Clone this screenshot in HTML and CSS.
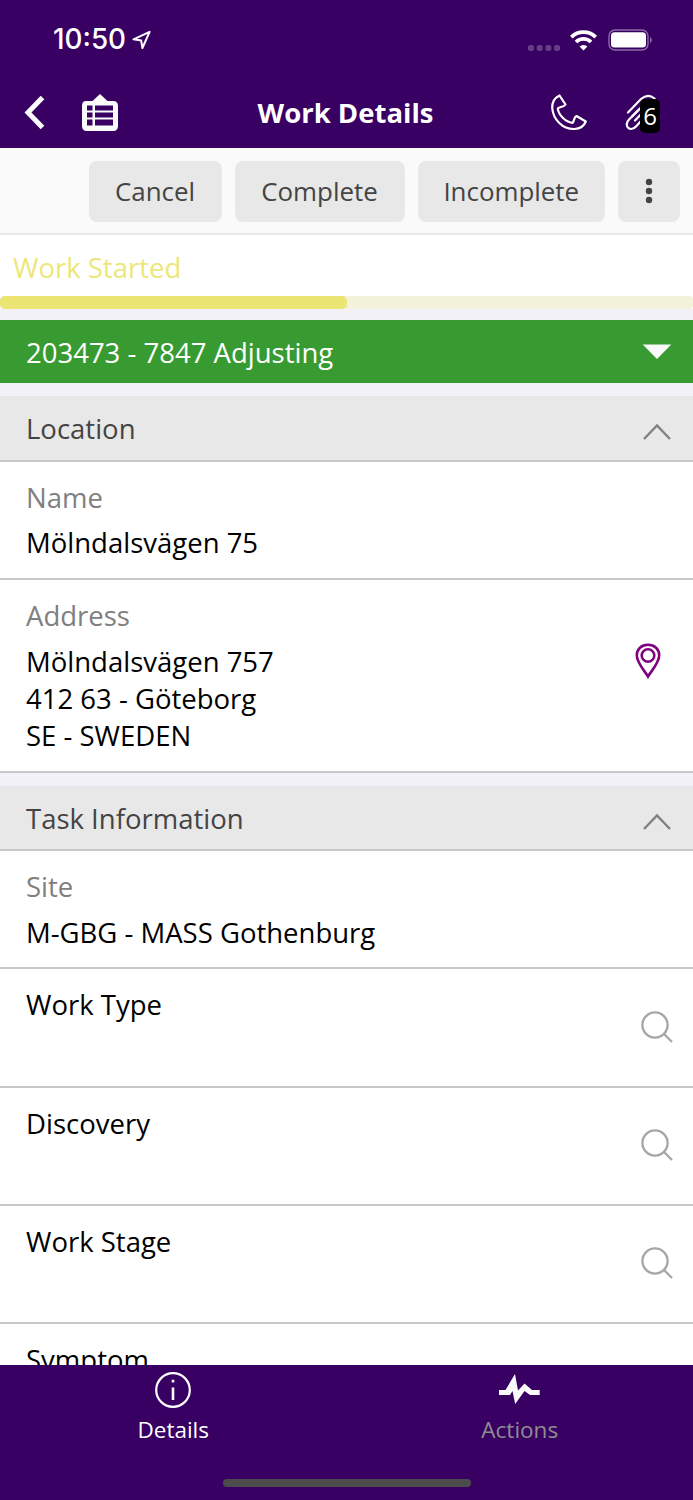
FILE: index.html
```
<!DOCTYPE html>
<html lang="en">
<head>
    <meta charset="UTF-8">
    <meta name="viewport" content="width=device-width, initial-scale=1.0">
    <title>Work Details</title>
    <link rel="stylesheet" href="styles.css">
</head>
<body>
<div class="app">
    <header class="header">
        <div class="status-bar">
            <span class="time">10:50</span>
            <svg class="location-arrow" width="20" height="20" viewBox="0 0 20 20">
                <path d="M1.5 9.3 L17.6 1.8 L10.4 18 L9.2 10.6 Z"/>
            </svg>
            <div class="status-icons">
                <svg width="33" height="6" viewBox="0 0 33 6" fill="#643c85">
                    <rect x="0" y="0" width="6" height="6" rx="2"/>
                    <rect x="8.7" y="0" width="6" height="6" rx="2"/>
                    <rect x="17.4" y="0" width="6" height="6" rx="2"/>
                    <rect x="26" y="0" width="6" height="6" rx="2"/>
                </svg>
                <svg class="wifi" width="27" height="21" viewBox="0 0 27 21" fill="none" stroke="#fff" stroke-width="3.8">
                    <path d="M1.3 7.1 A17.6 17.6 0 0 1 25.7 7.1"/>
                    <path d="M6 12 A10.8 10.8 0 0 1 21 12"/>
                    <path d="M13.5 20.6 L9.6 16.6 A5.6 5.6 0 0 1 17.4 16.6 Z" fill="#fff" stroke="none"/>
                </svg>
                <svg class="battery" width="45" height="22" viewBox="0 0 45 22">
                    <rect x="1" y="1" width="39" height="20" rx="6" fill="none" stroke="#8a6aa5" stroke-width="1.4"/>
                    <rect x="3" y="3.2" width="35" height="15.4" rx="3.5" fill="#fff"/>
                    <path d="M42 8 C44.4 9 44.4 13 42 14 Z" fill="#8a6aa5"/>
                </svg>
            </div>
        </div>
        <div class="nav-bar">
            <svg class="back" width="22" height="36" viewBox="0 0 22 36">
                <path d="M19.500 2.500 L5 17.500 L19.500 32.500"/>
            </svg>
            <svg class="board" width="38" height="40" viewBox="0 0 38 40">
                <path fill="#fafafa" fill-rule="evenodd" d="M5 8 H11.5 L19 1 L26.500 8 H32 Q37 8 37 13 V33 Q37 38 32 38 H6 Q1 38 1 33 V13 Q1 8 5 8 Z M6 12.500 V17.500 H11.500 V12.500 Z M14 12.500 V17.500 H32 V12.500 Z M6 19.500 V24.500 H11.500 V19.500 Z M14 19.500 V24.500 H32 V19.500 Z M6 26.500 V32.500 H11.500 V26.500 Z M14 26.500 V32.500 H32 V26.500 Z"/>
            </svg>
            <h1 class="title">Work Details</h1>
            <svg class="phone" width="38" height="38" viewBox="0 0 38 38">
                <path d="M9.500 1.500 C4.500 4 2 8.500 2.200 14 C3.200 25.500 12.500 35.500 24.500 35 C30 34.800 34 32 35.800 27.500 L26.500 22 C23.500 23.500 24.500 27 22.500 29 C15.500 28 8.500 21 7.800 14.500 C10 12.500 13.500 13.500 15.500 10.500 Z"/>
            </svg>
            <div class="attachments">
                <svg width="34" height="38" viewBox="0 0 34 38">
                    <path d="M3 18.500 L16 5 C21 0.500 26 1.500 29.500 4.500 C32 8.500 30 12 27 15 L11 32.500 C8 36 4 35.500 2.500 33 C1 30 2 27.500 4 25.500 L17 12.500"/>
                    <path d="M10 26.500 L22 14 M7 22.500 L14 15.500"/>
                </svg>
                <span class="badge">6</span>
            </div>
        </div>
    </header>

    <div class="toolbar">
        <button class="btn">Cancel</button>
        <button class="btn btn-complete">Complete</button>
        <button class="btn btn-incomplete">Incomplete</button>
        <button class="btn btn-more">
            <svg width="8" height="26" viewBox="0 0 8 26" fill="#444">
                <circle cx="4" cy="4" r="3.200"/>
                <circle cx="4" cy="13" r="3.200"/>
                <circle cx="4" cy="22" r="3.200"/>
            </svg>
        </button>
    </div>

    <main class="content">
        <div class="progress">
            <div class="progress-label">Work Started</div>
            <div class="progress-track"><div class="progress-fill"></div></div>
        </div>

        <div class="task">
            <span>203473 - 7847 Adjusting</span>
            <svg width="30" height="16" viewBox="0 0 30 16"><path d="M0.700 0.500 H29.300 L15 15 Z" fill="#fafafa"/></svg>
        </div>

        <section class="section">
            <div class="section-header">
                <h2>Location</h2>
                <svg class="chevron" width="30" height="18" viewBox="0 0 30 18"><path d="M2 16 L15 2.500 L28 16"/></svg>
            </div>
            <div class="row">
                <div class="label">Name</div>
                <div class="value">Mölndalsvägen 75</div>
            </div>
            <div class="row row-address">
                <div>
                    <div class="label">Address</div>
                    <div class="value">Mölndalsvägen 757<br>412 63 - Göteborg<br>SE - SWEDEN</div>
                </div>
                <svg class="pin" width="28" height="36" viewBox="0 0 28 36">
                    <path d="M14 33.500 C10 27 2.800 19.500 2.800 12.500 C2.800 6 7.500 1.800 14 1.800 C20.500 1.800 25.200 6 25.200 12.500 C25.200 19.500 18 27 14 33.500 Z"/>
                    <circle cx="14" cy="12.500" r="6.300"/>
                </svg>
            </div>
        </section>

        <section class="section">
            <div class="section-header">
                <h2>Task Information</h2>
                <svg class="chevron" width="30" height="18" viewBox="0 0 30 18"><path d="M2 16 L15 2.500 L28 16"/></svg>
            </div>
            <div class="row">
                <div class="label">Site</div>
                <div class="value">M-GBG - MASS Gothenburg</div>
            </div>
            <div class="row row-lookup">
                <div class="value">Work Type</div>
                <svg class="search" width="34" height="34" viewBox="0 0 34 34"><circle cx="15" cy="15" r="12.600"/><path d="M24 24 L32 32"/></svg>
            </div>
            <div class="row row-lookup">
                <div class="value">Discovery</div>
                <svg class="search" width="34" height="34" viewBox="0 0 34 34"><circle cx="15" cy="15" r="12.600"/><path d="M24 24 L32 32"/></svg>
            </div>
            <div class="row row-lookup">
                <div class="value">Work Stage</div>
                <svg class="search" width="34" height="34" viewBox="0 0 34 34"><circle cx="15" cy="15" r="12.600"/><path d="M24 24 L32 32"/></svg>
            </div>
            <div class="row row-lookup">
                <div class="value">Symptom</div>
            </div>
        </section>
    </main>

    <footer class="footer">
        <nav class="tabs">
            <div class="tab">
                <svg width="38" height="38" viewBox="0 0 38 38">
                    <circle cx="19" cy="19" r="16.800" fill="none" stroke="#fff" stroke-width="2.200"/>
                    <path d="M19 16.500 V29 M19 8.800 V11.500" stroke="#fff" stroke-width="2.600"/>
                </svg>
                <span>Details</span>
            </div>
            <div class="tab tab-inactive">
                <svg width="42" height="38" viewBox="0 0 42 38">
                    <path fill="#fafafa" d="M0 19 H6.500 L16 3 L19 19.500 L25.500 12.500 L33 19 H40.700 V24 H31 L25.500 20 L16.200 33 L13.500 20 L11 24 H0 Z"/>
                </svg>
                <span>Actions</span>
            </div>
        </nav>
        <div class="home-indicator"></div>
    </footer>
</div>
</body>
</html>
```

FILE: styles.css
```
* {
    box-sizing: border-box;
}
body {
    margin: 0;
    font-family: 'Open Sans', sans-serif;
    font-size: 27.5px;
    line-height: 37.3px;
    color: #000;
    background-color: #f2f1f7;
}
svg {
    display: block;
    flex-shrink: 0;
}
h1, h2 {
    margin: 0;
}
.app {
    display: flex;
    flex-direction: column;
    height: 1500px;
    overflow: hidden;
}

/* header */
.header {
    flex: none;
    height: 147.5px;
    background-color: #380063;
    color: #fff;
}
.status-bar {
    display: flex;
    align-items: center;
    height: 78px;
    padding: 2px 40px 0 53px;
}
.time {
    font-family: Inter, sans-serif;
    font-size: 27.8px;
    font-weight: 500;
}
.location-arrow {
    margin-left: 6px;
    fill: none;
    stroke: #fff;
    stroke-width: 2;
    stroke-linejoin: round;
}
.status-icons {
    display: flex;
    align-items: flex-end;
    margin-left: auto;
    padding-bottom: 1px;
}
.wifi {
    margin-left: 9px;
}
.battery {
    margin-left: 11px;
}
.nav-bar {
    display: flex;
    align-items: center;
    height: 70px;
    padding: 0 20px 0 23px;
}
.back {
    fill: none;
    stroke: #fafafa;
    stroke-width: 5;
}
.board {
    margin-left: 36px;
}
.title {
    flex: 1;
    margin-left: 22px;
    text-align: center;
    font-size: 27.5px;
    font-weight: 700;
}
.phone,
.attachments svg {
    fill: none;
    stroke: #fff;
    stroke-width: 2.2;
    stroke-linejoin: round;
    stroke-linecap: round;
}
.attachments {
    position: relative;
    width: 48px;
    margin-left: 37px;
}
.badge {
    position: absolute;
    top: 5px;
    left: 15px;
    width: 20px;
    height: 34px;
    border-radius: 5px;
    background-color: #000;
    text-align: center;
    font-size: 24px;
    line-height: 34px;
}

/* toolbar */
.toolbar {
    display: flex;
    flex: none;
    justify-content: flex-end;
    gap: 13px;
    height: 87.5px;
    padding: 13px 13px 0 0;
    border-bottom: 2px solid #e8e8e8;
    background-color: #fafafa;
}
.btn {
    width: 133px;
    height: 61.5px;
    padding: 0;
    border: 0;
    border-radius: 8px;
    background-color: #e8e8e8;
    color: #444;
    font-family: inherit;
    font-size: 25.9px;
}
.btn-complete {
    width: 170px;
}
.btn-incomplete {
    width: 187.5px;
}
.btn-more {
    display: flex;
    align-items: center;
    justify-content: center;
    width: 62px;
}

/* content */
.content {
    flex: 1;
    min-height: 0;
    overflow: hidden;
}
.progress {
    background-color: #fff;
}
.progress-label {
    height: 60.5px;
    padding: 14px 13px 0;
    color: #ece77a;
}
.progress-track {
    height: 13px;
    border-radius: 4px;
    background-color: #f3f2db;
}
.progress-fill {
    width: 50%;
    height: 100%;
    border-radius: 5px;
    background-color: #ebe574;
}
.task {
    display: flex;
    align-items: center;
    justify-content: space-between;
    height: 63.5px;
    margin-top: 11px;
    padding: 2px 21px 0 26px;
    background-color: #379b31;
    color: #fff;
}
.section {
    margin-top: 13px;
}
.section-header {
    display: flex;
    justify-content: space-between;
    height: 65.5px;
    padding: 14px 21px 0 26px;
    border-bottom: 2px solid #c8c7cc;
    background-color: #e8e8e8;
    color: #444;
}
.section-header h2 {
    font-size: 27.5px;
    font-weight: 400;
}
.chevron {
    margin-top: 13px;
    fill: none;
    stroke: #808080;
    stroke-width: 2.4;
}
.row {
    height: 118.2px;
    padding: 17px 26px 0;
    border-bottom: 2px solid #c8c7cc;
    background-color: #fff;
}
.label {
    margin-bottom: 8.7px;
    color: #808080;
}
.row-address,
.row-lookup {
    display: flex;
    justify-content: space-between;
}
.row-address {
    height: 193px;
    padding-right: 31.5px;
}
.row-lookup {
    padding-right: 19px;
}
.pin {
    margin-top: 46.5px;
    fill: none;
    stroke: #800080;
    stroke-width: 2.6;
}
.search {
    margin-top: 23.5px;
    fill: none;
    stroke: #a6a6a6;
    stroke-width: 2.3;
}

/* footer */
.footer {
    flex: none;
    height: 135px;
    background-color: #380063;
    color: #fff;
}
.tabs {
    display: flex;
    height: 113.5px;
}
.tab {
    display: flex;
    flex: 1;
    flex-direction: column;
    align-items: center;
    padding-top: 6px;
    font-size: 22.5px;
    line-height: 42px;
}
.tab-inactive span {
    color: #8e8e8e;
}
.home-indicator {
    width: 248px;
    height: 8px;
    margin: 0 auto;
    border-radius: 4px;
    background-color: #4c4c4c;
}
```
